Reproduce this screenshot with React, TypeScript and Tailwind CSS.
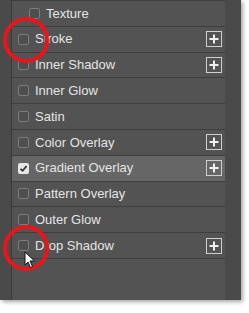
const rows = [
  { label: "Texture", indent: true },
  { label: "Stroke", plus: true },
  { label: "Inner Shadow", plus: true },
  { label: "Inner Glow" },
  { label: "Satin" },
  { label: "Color Overlay", plus: true },
  { label: "Gradient Overlay", plus: true, checked: true },
  { label: "Pattern Overlay" },
  { label: "Outer Glow" },
  { label: "Drop Shadow", plus: true },
];

function Checkbox({ checked }: { checked?: boolean }) {
  if (checked) {
    return (
      <div className="w-[11px] h-[11px] rounded-[2px] bg-[#e6e6e6] flex items-center justify-center">
        <svg width="9" height="9" viewBox="0 0 9 9">
          <path d="M1.5 4.8 L3.6 6.8 L7.6 2" fill="none" stroke="#333" strokeWidth="1.8" />
        </svg>
      </div>
    );
  }
  return <div className="w-[11px] h-[11px] rounded-[2px] border border-[#7c7c7c] bg-[#4e4e4e]" />;
}

function PlusButton() {
  return (
    <div className="w-[16px] h-[16px] border border-[#cfcfcf] flex items-center justify-center">
      <svg width="10" height="10" viewBox="0 0 10 10">
        <path d="M5 0.5 V9.5 M0.5 5 H9.5" stroke="#f0f0f0" strokeWidth="2" />
      </svg>
    </div>
  );
}

function Ring({ top }: { top: number }) {
  return (
    <div
      className="absolute left-[3px] w-[46px] h-[46px] rounded-full border-[4px] border-[#e8161b]"
      style={{ top }}
    />
  );
}

export default function App() {
  return (
    <div className="relative w-[249px] h-[313px] bg-white overflow-hidden" style={{ fontFamily: '"Liberation Sans", Arial, sans-serif' }}>
      <div className="flex w-[241px] h-[300px] bg-[#4a4a4a] shadow-[2px_2px_4px_rgba(0,0,0,0.35)]">
        <div className="w-[12px] border-r border-[#393939]" />
        <div className="flex-1 bg-[#535353] border-t border-[#3f3f3f]">
          {rows.map((r) => (
            <div
              key={r.label}
              className={`h-[25.8px] flex items-center border-b border-[#3e3e3e] ${r.checked ? "bg-[#666666]" : ""} ${r.indent ? "pl-[17px]" : "pl-[6px]"} pr-[3px]`}
            >
              <Checkbox checked={r.checked} />
              <span className="ml-[6px] text-[13px] text-[#e4e4e4] flex-1">{r.label}</span>
              {r.plus && <PlusButton />}
            </div>
          ))}
        </div>
        <div className="w-[16px] bg-[#4a4a4a]" />
      </div>
      <Ring top={17} />
      <Ring top={225} />
      <svg className="absolute left-[24px] top-[251px]" width="12" height="18" viewBox="0 0 12 18">
        <path d="M1 1 L1 14 L4 11 L6.5 16.5 L8.5 15.5 L6 10 L10.5 10 Z" fill="#fff" stroke="#111" strokeWidth="1" strokeLinejoin="round" />
      </svg>
    </div>
  );
}
